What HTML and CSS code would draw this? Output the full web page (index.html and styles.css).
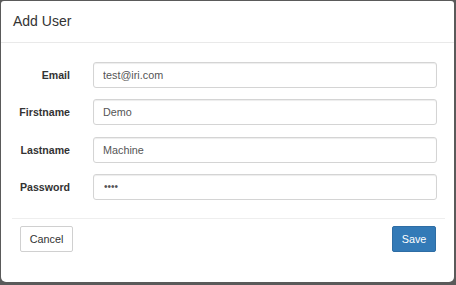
FILE: index.html
```html
<!DOCTYPE html>
<html lang="en">
<head>
  <meta charset="UTF-8" />
  <meta name="viewport" content="width=device-width, initial-scale=1.0" />
  <title>Add User</title>
  <link rel="stylesheet" href="styles.css">
</head>
<body>
  <div class="modal">
    <div class="modal-header">
      <h4 class="modal-title">Add User</h4>
    </div>
    <form class="modal-form" onsubmit="return false">
      <div class="modal-body">
        <div class="form-group">
          <label for="email">Email</label>
          <input type="text" id="email" value="test@iri.com" />
        </div>
        <div class="form-group">
          <label for="firstname">Firstname</label>
          <input type="text" id="firstname" value="Demo" />
        </div>
        <div class="form-group">
          <label for="lastname">Lastname</label>
          <input type="text" id="lastname" value="Machine" />
        </div>
        <div class="form-group">
          <label for="password">Password</label>
          <input type="password" id="password" value="test" />
        </div>
      </div>
      <div class="modal-footer">
        <button type="button" class="btn btn-default">Cancel</button>
        <button type="submit" class="btn btn-primary">Save</button>
      </div>
    </form>
  </div>
</body>
</html>
```

FILE: styles.css
```css
* {
  margin: 0;
  padding: 0;
  box-sizing: border-box;
}
html, body {
  height: 100%;
  overflow: hidden;
}
body {
  background-color: #5a5a5a;
  padding: 1px 2px 3px 1px;
  font-family: 'Liberation Sans', Arial, Helvetica, sans-serif;
  font-size: 11px;
  color: #333;
}
.modal {
  height: 100%;
  background: #fff;
  border-radius: 3px 3px 5px 5px;
  display: flex;
  flex-direction: column;
}
.modal-header {
  height: 42px;
  padding: 0 12px;
  display: flex;
  align-items: center;
  border-bottom: 1px solid #e9e9e9;
}
.modal-title {
  font-size: 14px;
  font-weight: normal;
  color: #333;
  margin-top: -1px;
}
.modal-form {
  flex: 1;
  display: flex;
  flex-direction: column;
}
.modal-body {
  padding: 19px 17px 18px 12px;
  display: flex;
  flex-direction: column;
  gap: 11.3px;
}
.form-group {
  display: grid;
  grid-template-columns: 57px 1fr;
  column-gap: 23px;
  align-items: center;
}
.form-group label {
  text-align: right;
  font-weight: bold;
  font-size: 10.6px;
  color: #333;
}
.form-group input {
  height: 26px;
  width: 100%;
  border: 1px solid #d4d4d4;
  border-radius: 3px;
  box-shadow: inset 0 1px 1px rgba(0,0,0,0.075);
  padding: 0 9px;
  font-family: inherit;
  font-size: 10.8px;
  color: #555;
  outline: none;
}
.form-group input[type="password"] {
  font-size: 10px;
  padding-left: 10px;
}
.modal-footer {
  margin: 0 9px 0 11px;
  border-top: 1px solid #eeeeee;
  padding: 7px 8px 0 8px;
  display: flex;
  justify-content: space-between;
}
.btn {
  height: 26px;
  border-radius: 2px;
  font-family: inherit;
  font-size: 10.8px;
  cursor: pointer;
}
.btn-default {
  width: 53px;
  background: #fff;
  border: 1px solid #d0d0d0;
  color: #333;
}
.btn-primary {
  width: 44px;
  margin-right: 1px;
  background: #337ab7;
  border: 1px solid #2e6da4;
  color: #fff;
}
```
